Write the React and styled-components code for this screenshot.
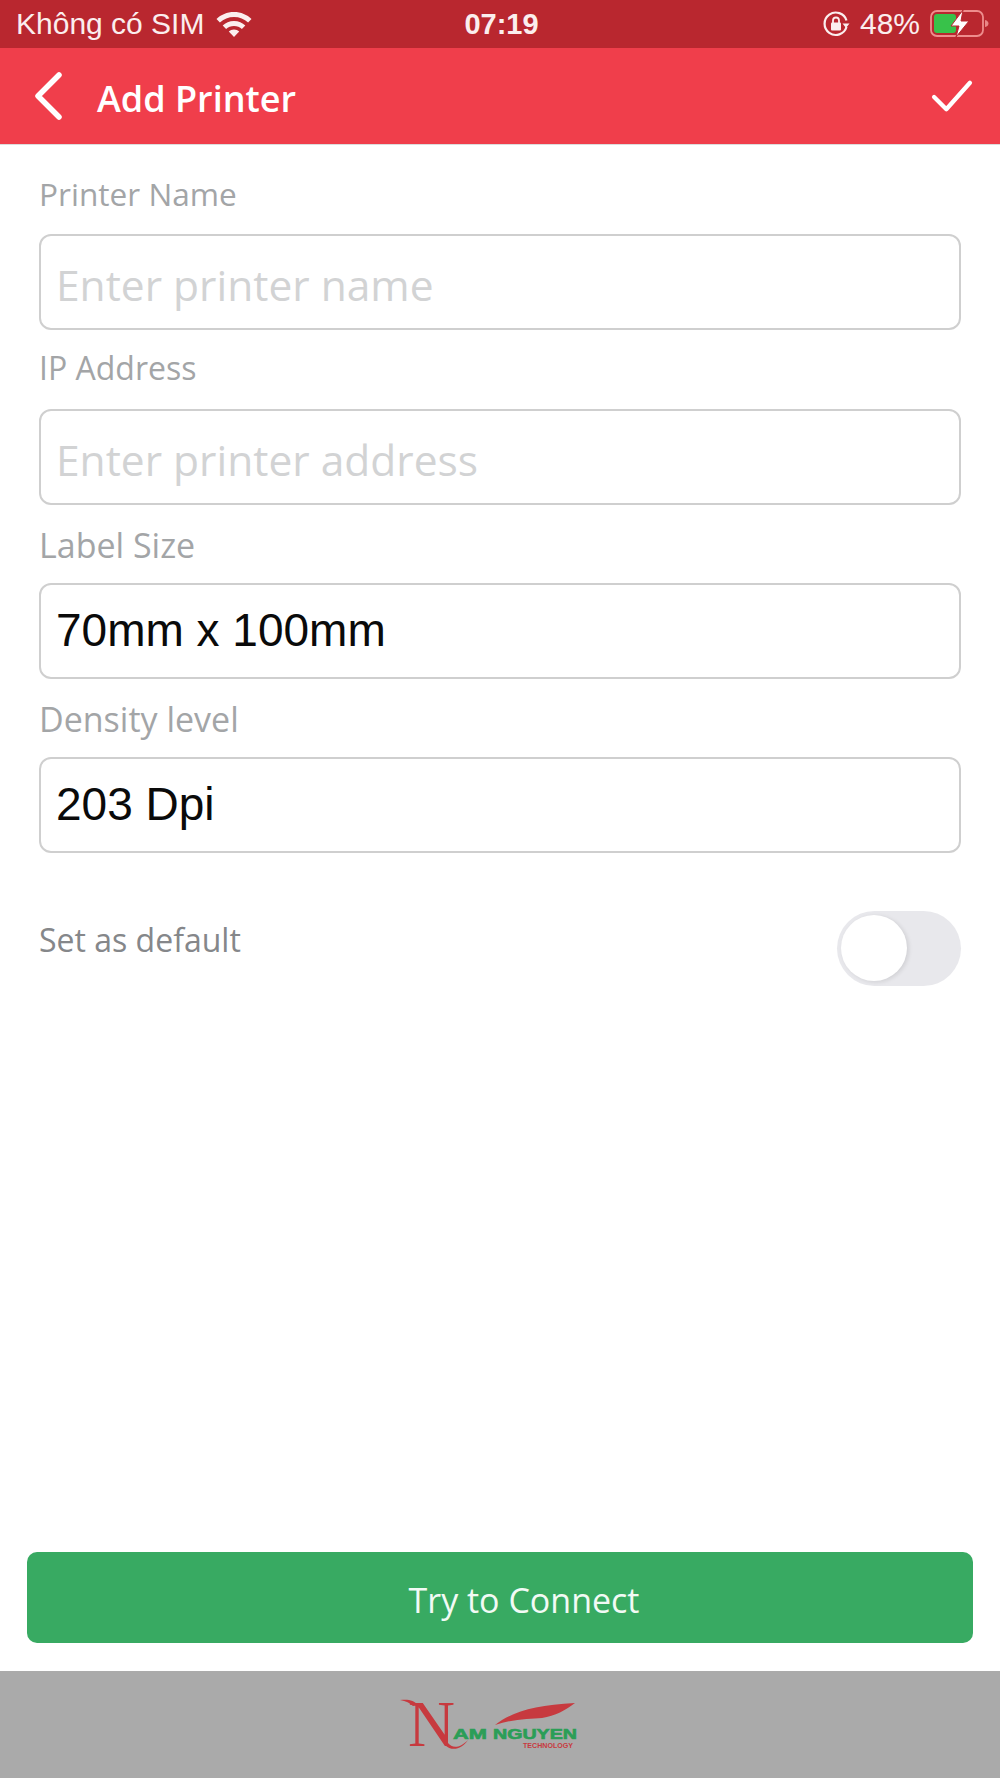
import React from 'react';
import styled, { createGlobalStyle } from 'styled-components';

const GlobalStyle = createGlobalStyle`
  html, body {
    margin: 0;
    padding: 0;
    background: #fff;
  }
  * {
    box-sizing: border-box;
  }
`;

const Screen = styled.div`
  width: 1000px;
  height: 1778px;
  display: flex;
  flex-direction: column;
  background: #fff;
  font-family: "Open Sans", "Noto Sans", sans-serif;
  overflow: hidden;
`;

const StatusBar = styled.div`
  height: 48px;
  padding: 0 10px 0 16px;
  display: grid;
  grid-template-columns: 1fr auto 1fr;
  align-items: center;
  background: #b9272f;
  color: #fbeeee;
  font-family: "Liberation Sans", Arial, sans-serif;
  font-size: 30px;
`;

const StatusGroup = styled.div`
  display: flex;
  align-items: center;
  gap: ${(p) => p.$gap || 10}px;
  justify-content: ${(p) => (p.$end ? 'flex-end' : 'flex-start')};
`;

const Clock = styled.div`
  font-size: 29px;
  font-weight: 700;
  margin-right: 3px;
`;

const Header = styled.div`
  height: 97px;
  padding: 0 27px 0 33px;
  display: flex;
  align-items: center;
  background: #f03e4b;
  color: #fff;
  border-bottom: 1px solid #dcdcdc;
`;

const Title = styled.div`
  margin-left: 34px;
  padding-top: 5px;
  flex: 1;
  font-size: 36px;
  font-weight: 600;
  line-height: 1;
`;

const Form = styled.div`
  flex: 1;
  display: flex;
  flex-direction: column;
  padding: 0 39px;
`;

const Label = styled.div`
  height: ${(p) => p.$height}px;
  padding-top: ${(p) => p.$top || 0}px;
  padding-bottom: ${(p) => p.$bottom || 0}px;
  display: flex;
  align-items: center;
  color: ${(p) => p.$color || '#a3a5a7'};
  font-size: ${(p) => p.$size || 32}px;
  font-weight: 400;
`;

const Field = styled.div`
  height: 96px;
  padding: ${(p) => (p.$placeholder ? '4px 15px 0' : '0 15px 3px')};
  display: flex;
  align-items: center;
  border: 2px solid #cfcfcf;
  border-radius: 12px;
  color: ${(p) => (p.$placeholder ? '#d2d3d4' : '#0a0a0a')};
  font-family: ${(p) => (p.$placeholder ? '"Open Sans", sans-serif' : '"Liberation Sans", Arial, sans-serif')};
  font-size: ${(p) => (p.$placeholder ? 42.5 : 46)}px;
`;

const DefaultRow = styled.div`
  margin-top: 58px;
  height: 76px;
  display: flex;
  align-items: flex-start;
  justify-content: space-between;
`;

const Switch = styled.div`
  width: 124px;
  height: 75px;
  padding: 4px;
  border-radius: 38px;
  background: #e8e8ec;
`;

const Knob = styled.div`
  width: 66px;
  height: 66px;
  border-radius: 50%;
  background: #fff;
  box-shadow: 2px 1px 4px rgba(0, 0, 0, 0.1);
`;

const ButtonWrap = styled.div`
  padding: 0 27px 28px;
`;

const ConnectButton = styled.div`
  height: 91px;
  padding: 4px 0 0 48px;
  display: flex;
  align-items: center;
  justify-content: center;
  border-radius: 10px;
  background: #38aa62;
  color: #f2faf5;
  font-size: 34px;
`;

const Footer = styled.div`
  height: 107px;
  display: flex;
  background: #aaaaaa;
  padding: 5px 0 0 400px;
`;

const WifiIcon = () => (
  <svg width="38" height="28" viewBox="0 0 38 28" fill="#fbeeee">
    <path d="M19 2C12 2 5.800 4.700 1.500 9l3.400 3.600C8.600 9 13.600 7 19 7s10.400 2 14.100 5.600L36.500 9C32.200 4.700 26 2 19 2z" />
    <path d="M19 11c-4.500 0-8.500 1.700-11.300 4.600l3.400 3.500c2-2 4.800-3.200 7.900-3.200s5.900 1.200 7.900 3.200l3.400-3.500C27.500 12.700 23.500 11 19 11z" />
    <path d="M19 19.500c-2.100 0-3.900.8-5.200 2.100L19 27l5.200-5.400c-1.300-1.300-3.100-2.100-5.200-2.100z" />
  </svg>
);

const RotationLockIcon = () => (
  <svg width="28" height="28" viewBox="0 0 28 28" fill="none">
    <path d="M24.500 17A11.200 11.200 0 1 1 24.500 10.500" stroke="#fbeeee" strokeWidth="2.200" />
    <path d="M20.500 13.500h7l-3.500 4.500z" fill="#fbeeee" />
    <rect x="9" y="12.500" width="10" height="8" rx="1" fill="#fbeeee" />
    <path d="M11 13V10.500a3 3 0 0 1 6 0V13" stroke="#fbeeee" strokeWidth="1.800" />
  </svg>
);

const BatteryIcon = () => (
  <svg width="60" height="30" viewBox="0 0 60 30" fill="none">
    <rect x="1" y="2" width="52" height="25" rx="6" stroke="#ee8d8d" strokeWidth="1.800" />
    <rect x="4" y="5" width="22" height="19" rx="3" fill="#38c24a" />
    <path d="M55 11c2.500.5 3.500 2 3.500 3.500S57.500 17.500 55 18z" fill="#e98787" />
    <path d="M33 1L21 17h8l-3 11 13-16h-8z" fill="#fff" stroke="#b9272f" strokeWidth="1" />
  </svg>
);

const BackIcon = () => (
  <svg width="30" height="48" viewBox="0 0 30 48" fill="none">
    <path d="M26 3L5 24l21 21" stroke="#fff" strokeWidth="5.500" strokeLinecap="round" strokeLinejoin="round" />
  </svg>
);

const CheckIcon = () => (
  <svg width="42" height="34" viewBox="0 0 44 36" fill="none">
    <path d="M3 19l13 13L41 4" stroke="#fff" strokeWidth="4.500" strokeLinecap="round" strokeLinejoin="round" />
  </svg>
);

const Logo = () => (
  <svg width="190" height="90" viewBox="0 -20 190 90">
    <text x="8" y="50" fontFamily="Liberation Serif" fontSize="65" fill="#c73a3f">N</text>
    <path d="M0 4c8-1 14 0 18 5l-5 1C10 7 6 5 0 4z" fill="#c73a3f" />
    <path d="M48 47c4 5 11 6 20-3-6 9-16 12-23 5z" fill="#c73a3f" />
    <path d="M95 29c16-13 40-20 80-22-9 7-20 13-33 15-12 1-30 1-47 7z" fill="#c73a3f" />
    <text x="53" y="43" fontFamily="Liberation Sans" fontWeight="700" fontSize="14" fill="#2b9e57" stroke="#2b9e57" strokeWidth="0.600" textLength="34" lengthAdjust="spacingAndGlyphs">AM</text>
    <text x="93" y="43" fontFamily="Liberation Sans" fontWeight="700" fontSize="14" fill="#2b9e57" stroke="#2b9e57" strokeWidth="0.600" textLength="84" lengthAdjust="spacingAndGlyphs">NGUYEN</text>
    <text x="123" y="52" fontFamily="Liberation Sans" fontWeight="700" fontSize="6.500" fill="#c73a3f" textLength="50" lengthAdjust="spacingAndGlyphs">TECHNOLOGY</text>
  </svg>
);

const App = () => {
  return (
    <Screen>
      <GlobalStyle />
      <StatusBar>
        <StatusGroup $gap={11}>
          <span>Không có SIM</span>
          <WifiIcon />
        </StatusGroup>
        <Clock>07:19</Clock>
        <StatusGroup $end $gap={10}>
          <RotationLockIcon />
          <span>48%</span>
          <BatteryIcon />
        </StatusGroup>
      </StatusBar>
      <Header>
        <BackIcon />
        <Title>Add Printer</Title>
        <CheckIcon />
      </Header>
      <Form>
        <Label $height={89} $top={7} $size={31.6}>Printer Name</Label>
        <Field $placeholder>Enter printer name</Field>
        <Label $height={79} $bottom={4}>IP Address</Label>
        <Field $placeholder>Enter printer address</Field>
        <Label $height={78} $top={2} $size={34}>Label Size</Label>
        <Field>70mm x 100mm</Field>
        <Label $height={78} $top={2} $size={34}>Density level</Label>
        <Field>203 Dpi</Field>
        <DefaultRow>
          <Label $height={56} $color="#85878a">Set as default</Label>
          <Switch>
            <Knob />
          </Switch>
        </DefaultRow>
      </Form>
      <ButtonWrap>
        <ConnectButton>Try to Connect</ConnectButton>
      </ButtonWrap>
      <Footer>
        <Logo />
      </Footer>
    </Screen>
  );
};

export default App;
